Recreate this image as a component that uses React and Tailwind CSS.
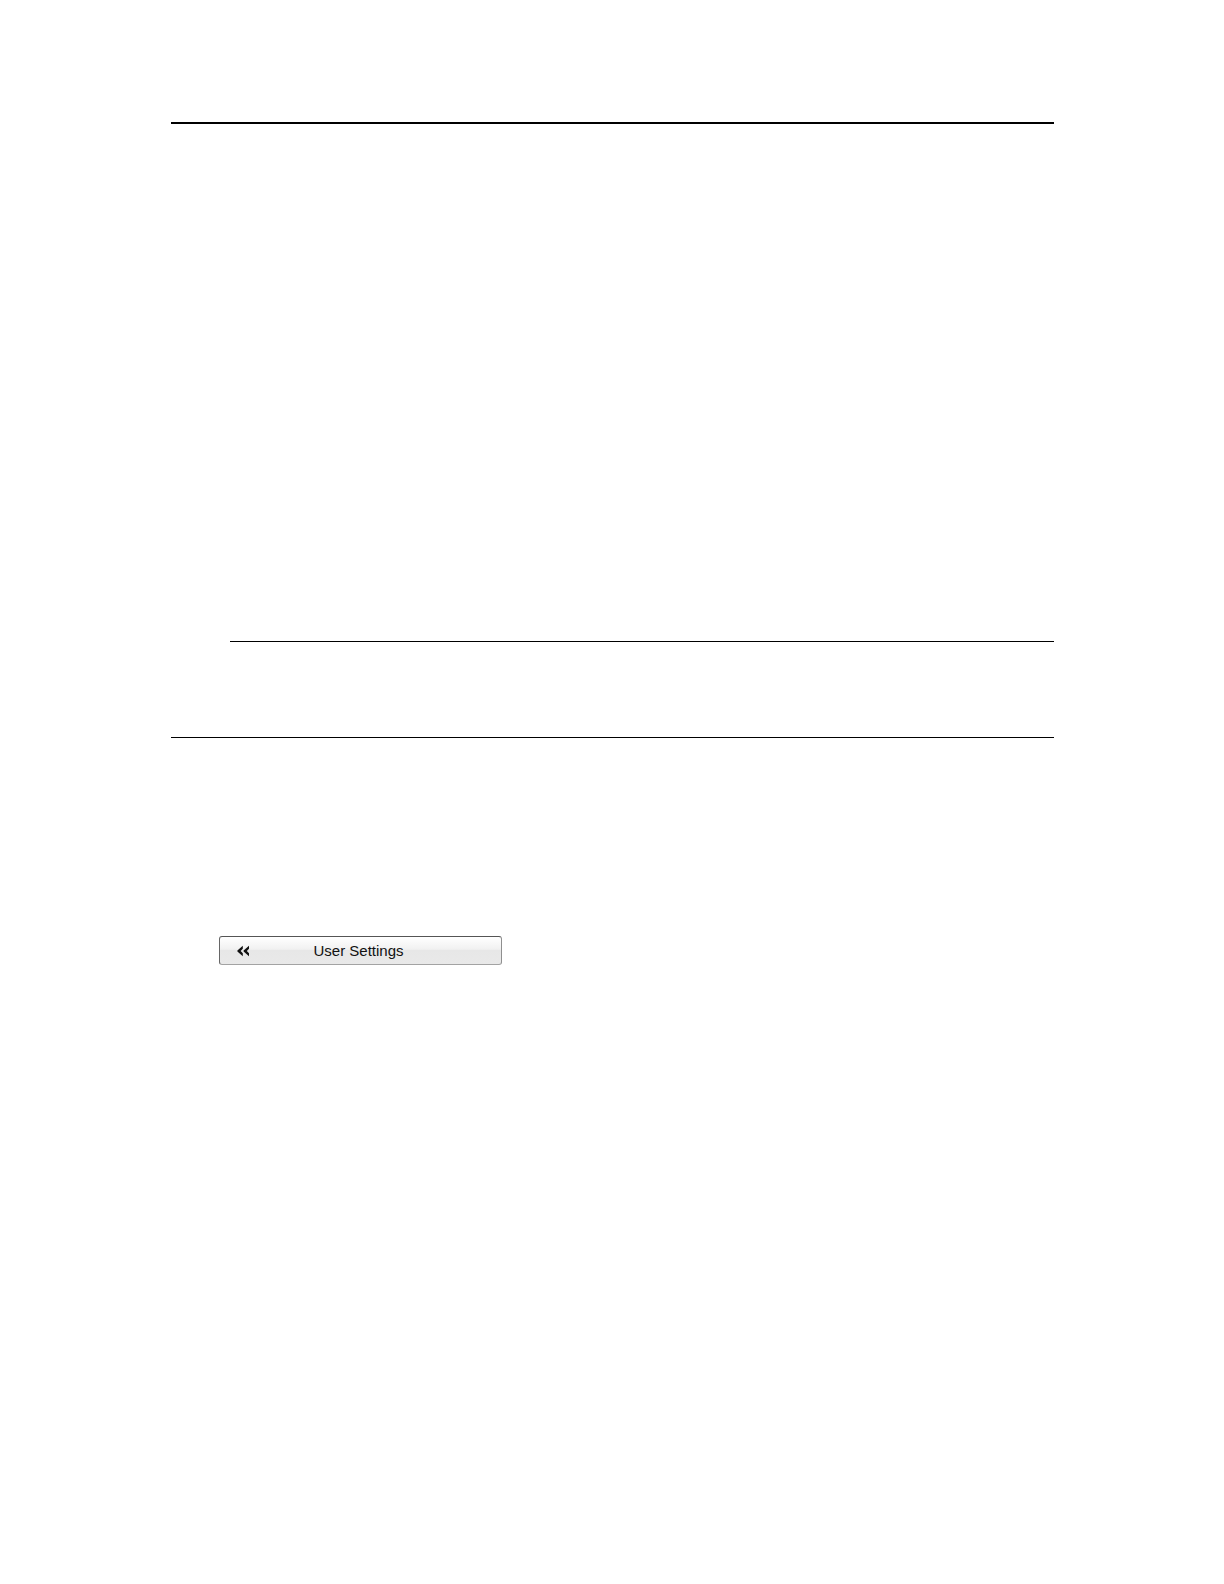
export default function App() {
  return (
    <div className="min-h-screen bg-white pl-[171px] pr-[170px] pt-[122px] pb-16 font-['Liberation_Sans',Arial,sans-serif]">
      <hr className="h-[2px] border-0 bg-black" />

      {/* NOTE AREA */}
      <section className="pt-[517px]">
        <hr className="ml-[59px] h-px border-0 bg-black" />
        <hr className="mt-[95px] h-px border-0 bg-black" />
      </section>

      {/* SETTINGS */}
      <main className="pt-[198px] pl-12">
        <button
          type="button"
          className="grid h-[29px] w-[283px] grid-cols-[48px_1fr_52px] items-center rounded-[3px] border border-t-[#555555] border-r-[#8f8f8f] border-b-[#a3a3a3] border-l-[#666666] bg-[linear-gradient(to_bottom,#ffffff_0%,#f1f1f1_45%,#e7e7e7_50%,#e9e9e9_100%)] text-[15px] leading-5 text-[#111111]"
        >
          <svg
            className="ml-[17px] h-3 w-[13px]"
            viewBox="0 0 13 12"
            fill="#111111"
            aria-hidden="true"
          >
            <path d="M5.8 0.8 V3.8 L3.6 6 L5.8 8.2 V11.2 L0.4 6.6 V5.4 Z" />
            <path d="M12 0.8 V3.8 L9.8 6 L12 8.2 V11.2 L6.6 6.6 V5.4 Z" />
          </svg>
          <span>User Settings</span>
        </button>
      </main>
    </div>
  );
}
